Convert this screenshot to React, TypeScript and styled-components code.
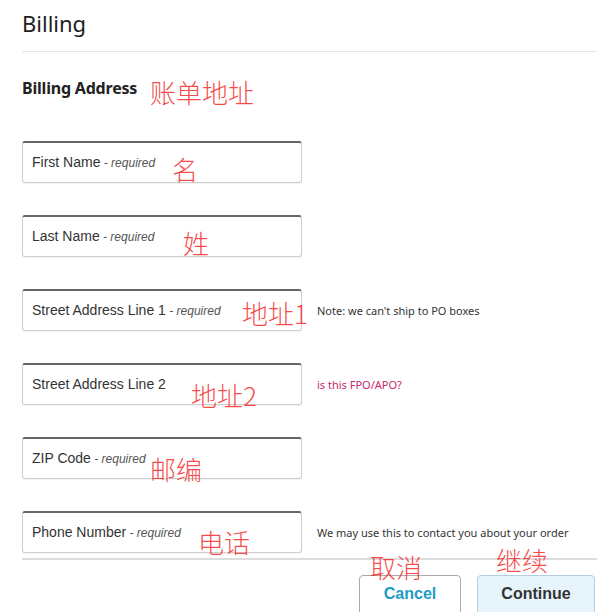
import styled, { createGlobalStyle } from 'styled-components'

const GlobalStyle = createGlobalStyle`
  html, body {
    margin: 0;
    padding: 0;
    background: #fff;
  }
`

const fields = [
  { label: 'First Name', required: true, note: '', mark: '名', mx: 172, my: 151 },
  { label: 'Last Name', required: true, note: '', mark: '姓', mx: 183, my: 225 },
  { label: 'Street Address Line 1', required: true, note: "Note: we can't ship to PO boxes", mark: '地址1', mx: 242, my: 295 },
  { label: 'Street Address Line 2', required: false, note: 'link', mark: '地址2', mx: 191, my: 377 },
  { label: 'ZIP Code', required: true, note: '', mark: '邮编', mx: 150, my: 451 },
  { label: 'Phone Number', required: true, note: 'We may use this to contact you about your order', mark: '电话', mx: 198, my: 524 },
]

const App = () => {
  return (
    <Page>
      <GlobalStyle />
      <Title>Billing</Title>
      <Divider />
      <SectionTitle>Billing Address</SectionTitle>
      <FieldList>
        {fields.map((f) => (
          <FieldRow key={f.label}>
            <InputBox>
              <Label>{f.label}</Label>
              {f.required && <Required> - required</Required>}
            </InputBox>
            {f.note === 'link' ? (
              <Note>
                <LinkText>is this FPO/APO?</LinkText>
              </Note>
            ) : (
              <Note>{f.note}</Note>
            )}
          </FieldRow>
        ))}
      </FieldList>
      <Footer>
        <Button>Cancel</Button>
        <Button $primary>Continue</Button>
      </Footer>

      <Mark $x={150} $y={74}>账单地址</Mark>
      {fields.map((f) => (
        <Mark key={f.mark} $x={f.mx} $y={f.my}>
          {f.mark}
        </Mark>
      ))}
      <Mark $x={370} $y={549}>取消</Mark>
      <Mark $x={496} $y={542}>继续</Mark>
    </Page>
  )
}

const Page = styled.div`
  position: relative;
  width: 597px;
  height: 612px;
  overflow: hidden;
  padding: 0 2px 0 22px;
  box-sizing: border-box;
  font-family: 'Noto Sans', 'Open Sans', sans-serif;
  color: #222;
`
const Title = styled.h1`
  margin: 0;
  padding-top: 7px;
  font-size: 22px;
  line-height: 32px;
  font-weight: 400;
  color: #1e1e1e;
`
const Divider = styled.div`
  margin: 12px -2px 0 0;
  height: 1px;
  background: #e6e6e6;
`
const SectionTitle = styled.h2`
  margin: 25px 0 0;
  font-size: 16px;
  line-height: 22px;
  font-weight: 700;
  letter-spacing: -0.2px;
  color: #222;
`
const FieldList = styled.div`
  display: flex;
  flex-direction: column;
  gap: 32px;
  margin-top: 42px;
`
const FieldRow = styled.div`
  display: flex;
  align-items: center;
  gap: 15px;
`
const InputBox = styled.div`
  width: 280px;
  height: 42px;
  box-sizing: border-box;
  flex: none;
  border: 1px solid #cfcfcf;
  border-top: 2px solid #666;
  border-radius: 3px;
  box-shadow: 0 1px 1px rgba(0, 0, 0, 0.06);
  padding: 10px 0 0 9px;
  font-family: 'Liberation Sans', Arial, sans-serif;
  white-space: nowrap;
`
const Label = styled.span`
  font-size: 14px;
  color: #333;
`
const Required = styled.span`
  font-size: 12px;
  font-style: italic;
  color: #555;
`
const Note = styled.span`
  font-size: 11px;
  color: #333;
  white-space: nowrap;
`
const LinkText = styled.span`
  color: #c8286e;
`
const Footer = styled.div`
  margin-top: 5px;
  margin-right: -2px;
  border-top: 2px solid #dcdcdc;
  display: flex;
  justify-content: flex-end;
  gap: 16px;
  padding: 15px 2px 0 0;
`
const Button = styled.button<{ $primary?: boolean }>`
  height: 40px;
  width: ${(p) => (p.$primary ? '118px' : '102px')};
  border-radius: 4px;
  border: 1px solid ${(p) => (p.$primary ? '#b4cde2' : '#aaa')};
  background: ${(p) => (p.$primary ? '#e8f4fc' : '#fff')};
  color: ${(p) => (p.$primary ? '#333' : '#1d9cc6')};
  font-family: 'Liberation Sans', Arial, sans-serif;
  font-size: 16px;
  font-weight: 700;
  padding: 0 0 2px;
`
const Mark = styled.span<{ $x: number; $y: number }>`
  position: absolute;
  left: ${(p) => p.$x}px;
  top: ${(p) => p.$y}px;
  font-family: 'Noto Sans CJK SC', sans-serif;
  font-size: 26px;
  line-height: 36px;
  font-weight: 300;
  color: rgba(245, 40, 40, 0.85);
  white-space: nowrap;
`

export default App
